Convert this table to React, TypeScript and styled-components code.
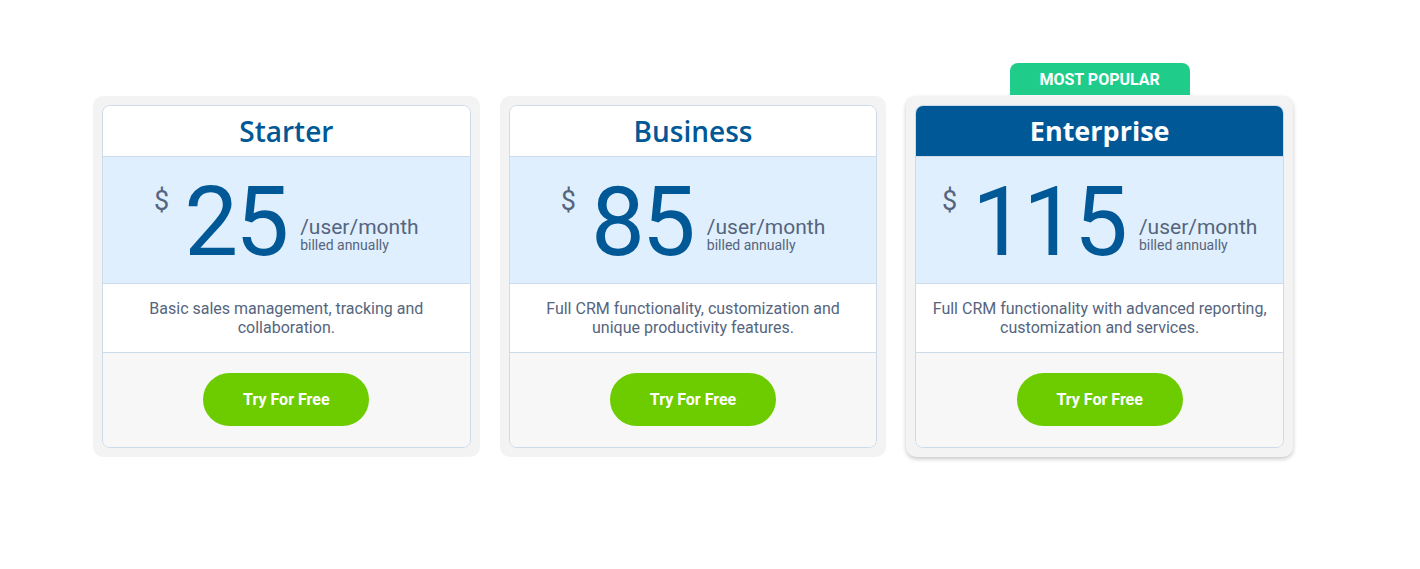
import styled, { createGlobalStyle, css } from "styled-components";

type Plan = {
  name: string;
  price: string;
  blurb: string;
  featured?: boolean;
};

const plans: Plan[] = [
  {
    name: "Starter",
    price: "25",
    blurb: "Basic sales management, tracking and collaboration.",
  },
  {
    name: "Business",
    price: "85",
    blurb: "Full CRM functionality, customization and unique productivity features.",
  },
  {
    name: "Enterprise",
    price: "115",
    blurb: "Full CRM functionality with advanced reporting, customization and services.",
    featured: true,
  },
];

const App = () => (
  <>
    <GlobalStyle />
    <Page>
      <PlanGrid>
        {plans.map((plan) => (
          <Shell key={plan.name} $featured={!!plan.featured}>
            {plan.featured && <Badge>MOST POPULAR</Badge>}
            <Card>
              <Header $featured={!!plan.featured}>{plan.name}</Header>
              <PriceBand>
                <Currency>$</Currency>
                <Amount>{plan.price}</Amount>
                <Terms>
                  <Per>/user/month</Per>
                  <Billing>billed annually</Billing>
                </Terms>
              </PriceBand>
              <Blurb>{plan.blurb}</Blurb>
              <Footer>
                <TryButton type="button">Try For Free</TryButton>
              </Footer>
            </Card>
          </Shell>
        ))}
      </PlanGrid>
    </Page>
  </>
);

const GlobalStyle = createGlobalStyle`
  body {
    margin: 0;
    background: #ffffff;
    font-family: Roboto, "Liberation Sans", Arial, sans-serif;
  }
`;

const Page = styled.main`
  padding: 96px 0 0 93px;
  min-height: 569px;
  box-sizing: border-box;
`;

const PlanGrid = styled.div`
  width: 1200px;
  display: grid;
  grid-template-columns: repeat(3, 1fr);
  gap: 20px;
  align-items: start;
`;

const Shell = styled.section<{ $featured: boolean }>`
  position: relative;
  padding: 9px;
  border-radius: 10px;
  background: #f3f3f3;
  ${({ $featured }) =>
    $featured &&
    css`
      box-shadow: 0 2px 4px rgba(0, 0, 0, 0.22);
    `}
`;

const Badge = styled.div`
  position: absolute;
  bottom: 100%;
  left: 0;
  right: 0;
  margin: 0 auto 1px;
  width: 180px;
  height: 32px;
  border-radius: 8px 8px 0 0;
  background: #20cc8a;
  color: #ffffff;
  font-size: 16px;
  font-weight: 700;
  display: flex;
  align-items: center;
  justify-content: center;
`;

const Card = styled.div`
  border: 1px solid #cbdbea;
  border-radius: 8px;
  overflow: hidden;
  background: #ffffff;
`;

const Header = styled.h2<{ $featured: boolean }>`
  margin: 0;
  height: 51px;
  padding-bottom: 1px;
  box-sizing: border-box;
  display: flex;
  align-items: center;
  justify-content: center;
  font-family: "Open Sans", Roboto, sans-serif;
  font-size: 28px;
  font-weight: 600;
  border-bottom: 1px solid #cbdbea;
  color: #005896;
  background: #ffffff;
  ${({ $featured }) =>
    $featured &&
    css`
      color: #ffffff;
      font-weight: 700;
      font-size: 27px;
      background: #005896;
    `}
`;

const PriceBand = styled.div`
  height: 127px;
  box-sizing: border-box;
  padding-top: 17px;
  display: flex;
  justify-content: center;
  align-items: flex-start;
  background: #e0effd;
  border-bottom: 1px solid #cbdbea;
`;

const Currency = styled.span`
  margin: 14px 15px 0 0;
  font-size: 27px;
  line-height: 1;
  color: #55657e;
`;

const Amount = styled.span`
  font-size: 96px;
  line-height: 1;
  color: #005896;
  letter-spacing: -3px;
`;

const Terms = styled.div`
  margin: 43px 0 0 14px;
  display: flex;
  flex-direction: column;
  color: #55657e;
`;

const Per = styled.span`
  font-size: 21px;
  line-height: 20px;
`;

const Billing = styled.span`
  font-size: 14px;
  line-height: 17px;
`;

const Blurb = styled.p`
  margin: 0;
  padding: 15px 16px;
  min-height: 69px;
  box-sizing: border-box;
  text-align: center;
  font-size: 16px;
  line-height: 19px;
  color: #55657e;
  border-bottom: 1px solid #cbdbea;
`;

const Footer = styled.div`
  padding: 20px 0 21px;
  display: flex;
  justify-content: center;
  background: #f7f7f7;
`;

const TryButton = styled.button`
  width: 166px;
  height: 53px;
  border: 0;
  border-radius: 27px;
  background: #6dcc00;
  color: #ffffff;
  font-family: inherit;
  font-size: 16px;
  font-weight: 700;
  cursor: pointer;
`;

export default App;
